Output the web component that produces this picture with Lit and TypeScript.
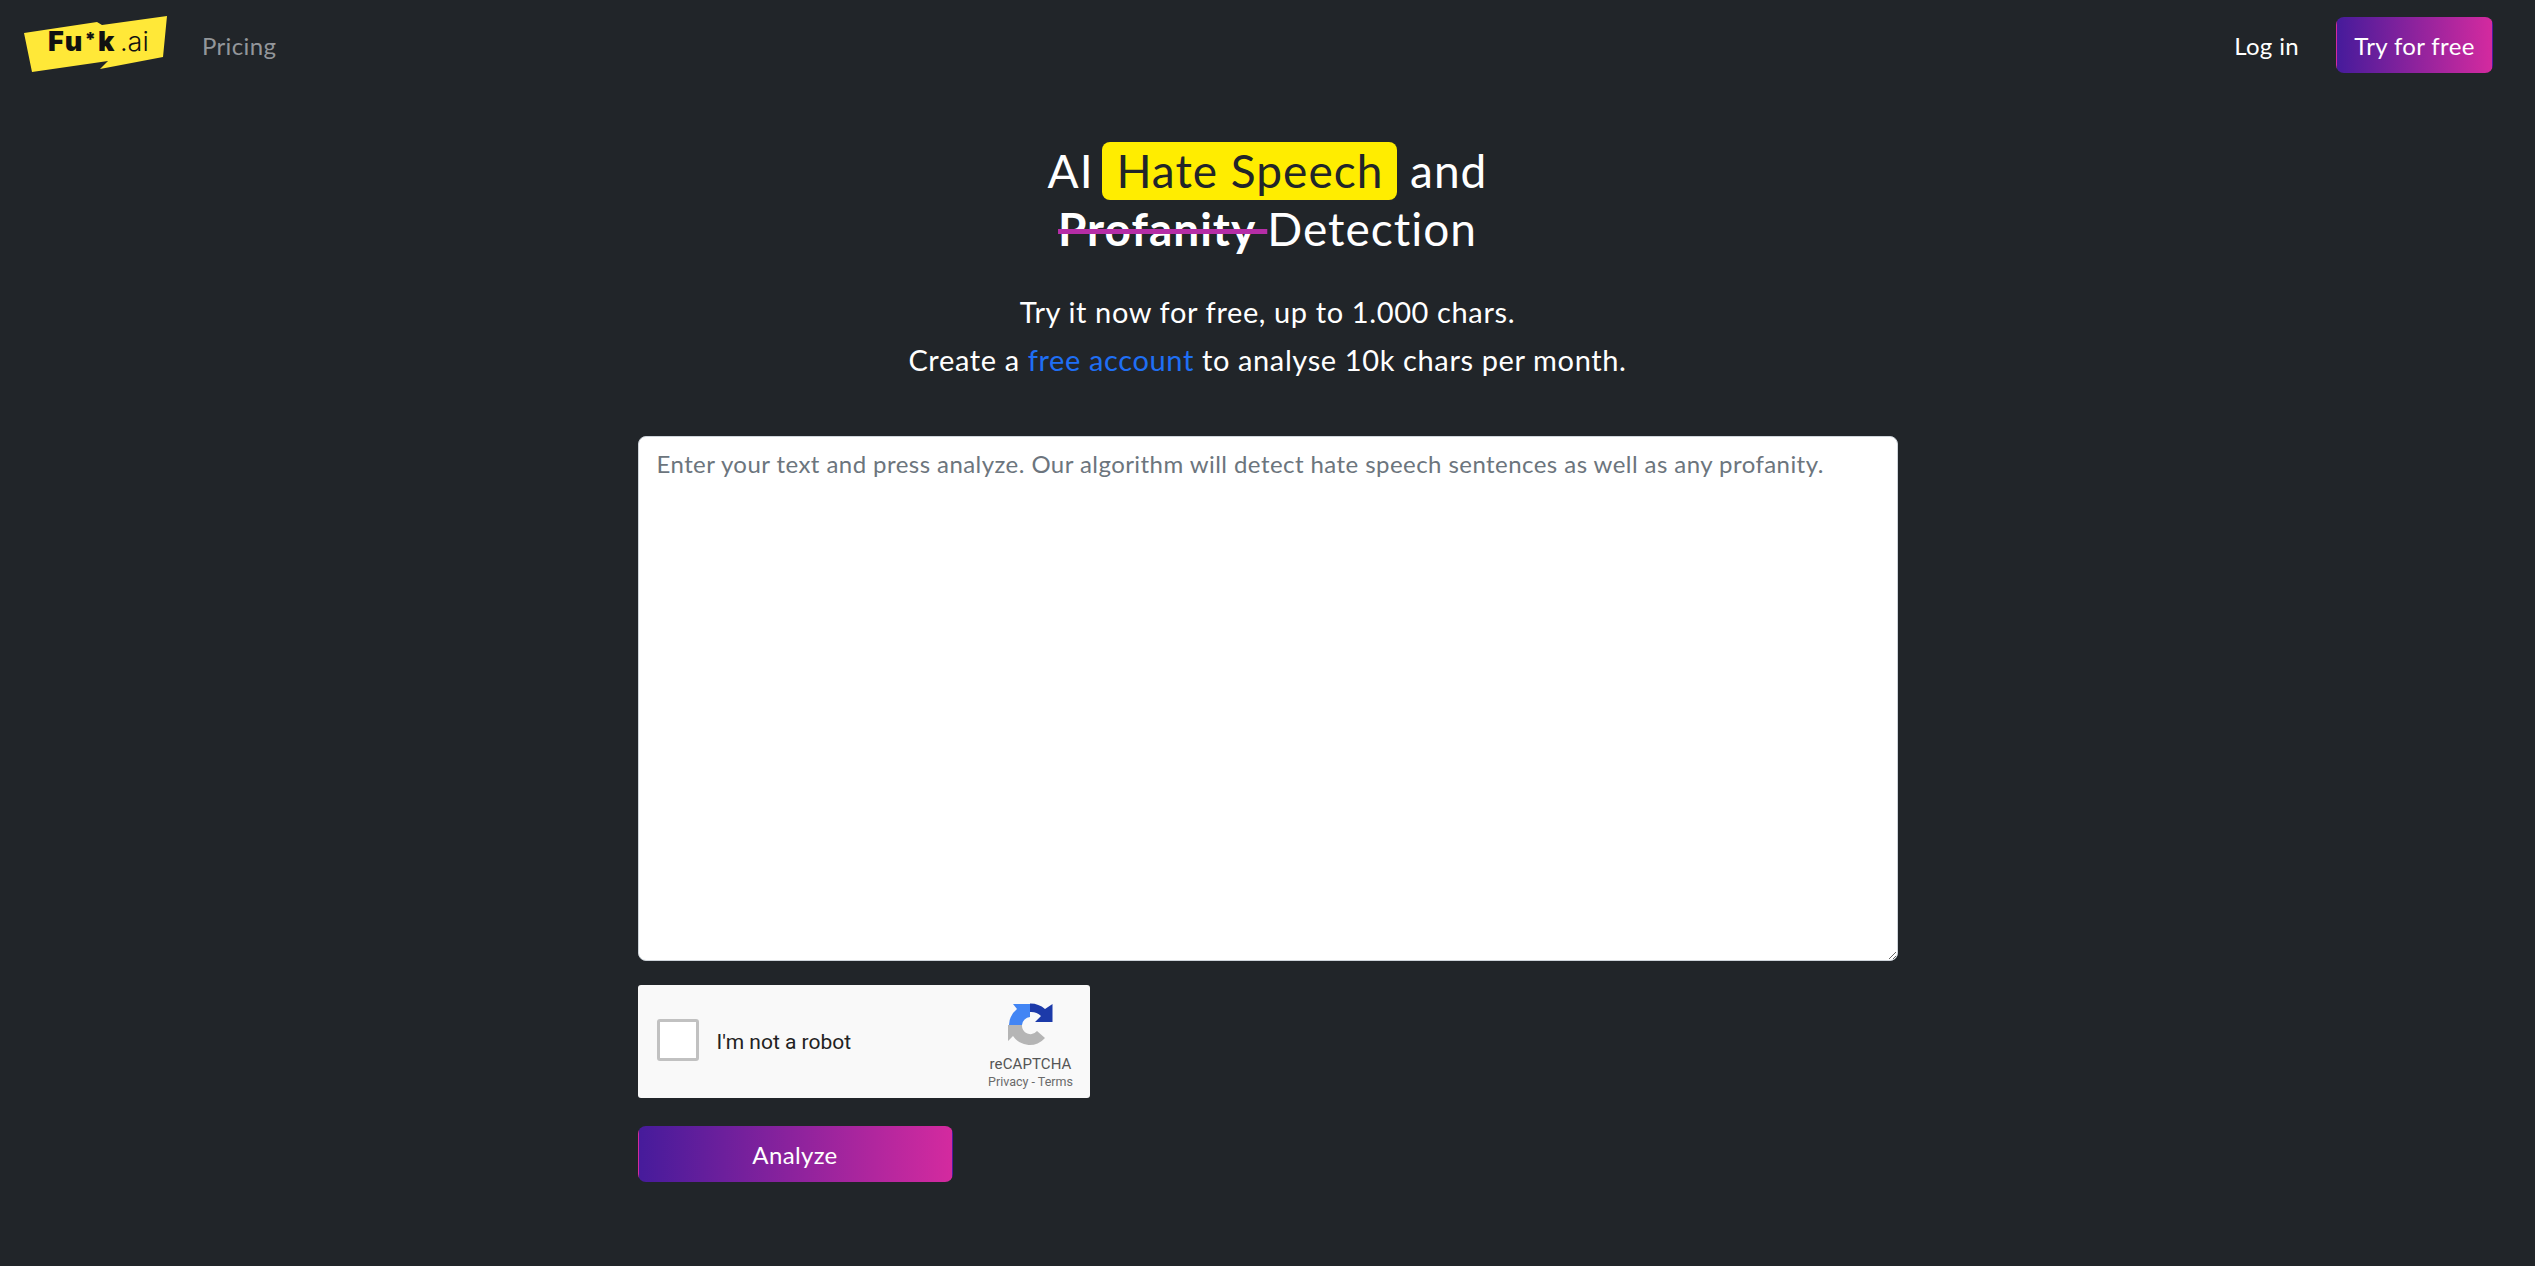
import { LitElement, css, html } from "lit";
import { customElement } from "lit/decorators.js";

@customElement("app-root")
export class AppRoot extends LitElement {
  static styles = css`
    :host {
      display: block;
      min-height: 1266px;
      background: #212529;
      color: #fff;
      font-family: "Lato", "Noto Sans", sans-serif;
    }
    .gradient {
      border: 1px solid transparent;
      background: linear-gradient(90deg, #461b9b, #d42a9f);
      color: #fff;
      border-radius: 8px;
      font: inherit;
      font-size: 24px;
      letter-spacing: 0.35px;
    }
    nav {
      display: flex;
      align-items: center;
      height: 91px;
      box-sizing: border-box;
      padding: 17px 42px 18px 24px;
    }
    .logo {
      display: block;
      width: 143px;
      height: 58px;
    }
    .wordmark {
      font-family: "Inter", sans-serif;
      font-size: 27px;
      font-weight: 900;
      letter-spacing: 2px;
      fill: #111;
    }
    .wordmark-light {
      font-family: "Inter", sans-serif;
      font-size: 27px;
      font-weight: 300;
      fill: #111;
    }
    .pricing {
      margin-left: 35px;
      font-size: 24px;
      letter-spacing: 0.35px;
      color: #93969a;
      text-decoration: none;
    }
    .login {
      margin-left: auto;
      font-size: 24px;
      letter-spacing: 0.35px;
      color: #fff;
      text-decoration: none;
    }
    .try {
      margin-left: 37px;
      width: 157px;
      height: 56px;
      padding: 0;
    }
    main {
      width: 1260px;
      margin: 0 auto;
    }
    h1 {
      margin: 51px 0 0;
      font-size: 46px;
      font-weight: 400;
      line-height: 58px;
      letter-spacing: 1px;
      text-align: center;
    }
    .mark {
      display: inline-block;
      height: 58px;
      margin-left: -4px;
      padding: 0 14px;
      background: #ffed00;
      color: #212529;
      border-radius: 8px;
    }
    .strike {
      font-weight: 700;
      text-decoration: line-through;
      text-decoration-color: #b52da6;
      text-decoration-thickness: 5px;
    }
    .sub {
      margin: 30px 0 52px;
      font-size: 29px;
      line-height: 48px;
      letter-spacing: 0.62px;
      text-align: center;
    }
    .sub a {
      color: #1f6ff5;
      text-decoration: none;
    }
    textarea {
      display: block;
      box-sizing: border-box;
      width: 100%;
      height: 525px;
      padding: 9px 18px;
      border: 1px solid #ced4da;
      border-radius: 8px;
      background: #fff;
      font: inherit;
      font-size: 24px;
      line-height: 36px;
      letter-spacing: 0.44px;
      outline: none;
    }
    textarea::placeholder {
      color: #6c757d;
    }
    .captcha {
      display: flex;
      align-items: flex-start;
      box-sizing: border-box;
      width: 452px;
      height: 113px;
      margin-top: 24px;
      background: #f9f9f9;
      border-radius: 3px;
      font-family: "Roboto", sans-serif;
    }
    .check {
      box-sizing: border-box;
      width: 42px;
      height: 42px;
      margin: 34px 0 0 19px;
      background: #fff;
      border: 3px solid #c1c1c1;
      border-radius: 3px;
    }
    .robot {
      margin: 44px 0 0 18px;
      font-size: 21px;
      line-height: 26px;
      color: #222;
    }
    .brand {
      display: flex;
      flex-direction: column;
      align-items: center;
      width: 90px;
      margin-left: auto;
      margin-right: 14px;
      padding-top: 18px;
      color: #555;
    }
    .brand svg {
      display: block;
      width: 45px;
      height: 45px;
    }
    .brand .name {
      margin-top: 7px;
      font-size: 15px;
      line-height: 18px;
      letter-spacing: 0.1px;
    }
    .brand .links {
      font-size: 12.5px;
      line-height: 18px;
      color: #6a6a6a;
      white-space: nowrap;
    }
    .analyze {
      display: block;
      width: 315px;
      height: 56px;
      margin-top: 28px;
      padding: 0;
    }
  `;

  render() {
    return html`
      <nav>
        <svg class="logo" viewBox="0 0 143 58">
          <path
            fill="#ffe838"
            d="M0 17 L73 6 L78 9 L143 0 L139 41 L76 53 L84 45 L8 56 Z"
          />
          <text class="wordmark" x="24" y="35">Fu<tspan font-size="19" dy="-5">*</tspan><tspan dy="5">k</tspan></text>
          <text class="wordmark-light" x="96" y="35">.ai</text>
        </svg>
        <a class="pricing" href="#">Pricing</a>
        <a class="login" href="#">Log in</a>
        <button class="gradient try">Try for free</button>
      </nav>
      <main>
        <h1>
          AI <span class="mark">Hate Speech</span> and<br />
          <span class="strike">Profanity </span>Detection
        </h1>
        <p class="sub">
          Try it now for free, up to 1.000 chars.<br />
          Create a <a href="#">free account</a> to analyse 10k chars per month.
        </p>
        <textarea placeholder="Enter your text and press analyze. Our algorithm will detect hate speech sentences as well as any profanity."></textarea>
        <div class="captcha">
          <div class="check"></div>
          <div class="robot">I'm not a robot</div>
          <div class="brand">
            <svg viewBox="0 0 45 45">
              <path fill="#b5b5b5" d="M0 38 V22 H14 A8.5 8.5 0 0 0 29 28 L37 35 A20 20 0 0 1 5 33 Z" />
              <path fill="#4285f4" d="M1 22 A21 21 0 0 1 9 6 L5 1 H22 V14 A9 9 0 0 0 14 22 Z" />
              <path fill="#1c3aa9" d="M22 0.5 A22 22 0 0 1 37 6 L44.5 1 V19 H27 L33 13 A14 14 0 0 0 22 9 Z" />
            </svg>
            <div class="name">reCAPTCHA</div>
            <div class="links">Privacy - Terms</div>
          </div>
        </div>
        <button class="gradient analyze">Analyze</button>
      </main>
    `;
  }
}
